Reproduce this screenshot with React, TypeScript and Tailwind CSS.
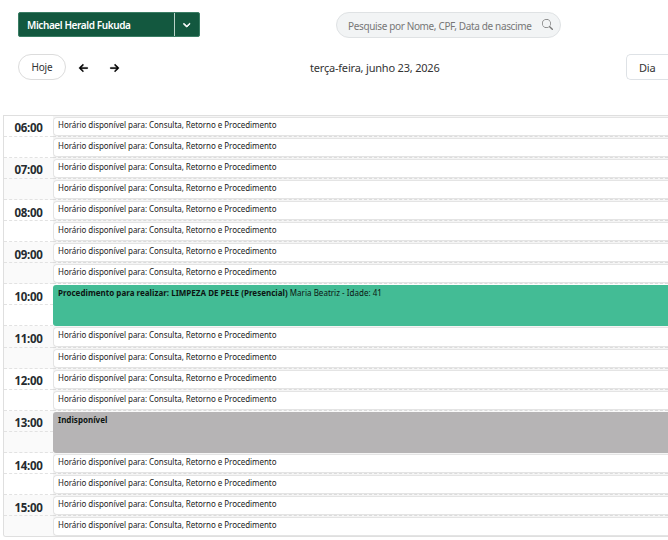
import clsx from 'clsx'
import { BsSearch } from 'react-icons/bs'
import { FaArrowLeft, FaArrowRight, FaChevronDown } from 'react-icons/fa6'

type Appointment = {
  kind: 'booked' | 'blocked'
  title: string
  detail?: string
}

const hours: { time: string; appointment?: Appointment }[] = [
  { time: '06:00' },
  { time: '07:00' },
  { time: '08:00' },
  { time: '09:00' },
  {
    time: '10:00',
    appointment: {
      kind: 'booked',
      title: 'Procedimento para realizar: LIMPEZA DE PELE (Presencial)',
      detail: 'Maria Beatriz - Idade: 41',
    },
  },
  { time: '11:00' },
  { time: '12:00' },
  { time: '13:00', appointment: { kind: 'blocked', title: 'Indisponível' } },
  { time: '14:00' },
  { time: '15:00' },
]

function FreeSlot() {
  return (
    <div className="h-[21.09px] border-b border-dashed border-[#dcdcdc] bg-[#f5f5f5] pt-px">
      <div className="h-full rounded-l-[4px] border border-r-0 border-[#e4e4e4] bg-white pl-1 text-[8px] leading-[13px] tracking-[-0.05px] whitespace-nowrap text-[#222]">
        Horário disponível para: Consulta, Retorno e Procedimento
      </div>
    </div>
  )
}

function AppointmentCard({ kind, title, detail }: Appointment) {
  return (
    <div className="h-[42.18px] pt-px">
      <div
        className={clsx(
          'h-full rounded-l-[3px] pl-[5px] text-[8px] leading-[15px] tracking-[0.02px] whitespace-nowrap text-[#0c1512]',
          kind === 'booked' ? 'bg-[#43bc95]' : 'bg-[#b6b4b5]',
        )}
      >
        <b>{title}</b> {detail && <span>{detail}</span>}
      </div>
    </div>
  )
}

function Toolbar() {
  return (
    <header className="h-[114.6px] pt-3">
      <div className="flex h-[26px]">
        <button className="ml-[18px] flex h-[25px] w-[182px] items-center rounded-[2px] border border-[#3a7d64] bg-[#13583f] text-[10px] font-semibold tracking-[-0.4px] text-white">
          <span className="flex-1 pt-px pl-2 text-left">Michael Herald Fukuda</span>
          <span className="flex h-full w-[25px] items-center justify-center border-l border-[#b9d3c8]">
            <FaChevronDown size={7.5} stroke="currentColor" strokeWidth={60} />
          </span>
        </button>
        <div className="ml-[136px] flex h-[26px] w-[225px] items-center justify-between rounded-full border border-[#dfe2e4] bg-[#f2f4f5] pr-[7px] pl-[11px] text-[10px] whitespace-nowrap text-[#777]">
          <span className="pt-[2px] tracking-[-0.36px]">Pesquise por Nome, CPF, Data de nascime</span>
          <BsSearch size={11} className="mb-px shrink-0" />
        </div>
      </div>
      <div className="mt-4 flex h-[26px] items-center">
        <button className="ml-[18px] h-[26px] w-12 rounded-full border border-[#dcdcdc] text-[10px] tracking-[-0.2px] text-[#333]">
          Hoje
        </button>
        <FaArrowLeft size={11} stroke="currentColor" strokeWidth={24} className="ml-3 pt-px text-black" />
        <FaArrowRight size={11} stroke="currentColor" strokeWidth={24} className="ml-5 pt-px text-black" />
        <h1 className="ml-[190px] w-[131px] pt-[2px] text-[11px] tracking-[-0.2px] whitespace-nowrap text-[#333]">
          terça-feira, junho 23, 2026
        </h1>
        <button className="ml-auto h-[26px] w-[42px] rounded-l-[5px] border border-r-0 border-[#dee2e6] pt-[2px] pl-3 text-left text-[11px] tracking-[-0.2px] text-[#333]">
          Dia
        </button>
      </div>
    </header>
  )
}

export default function App() {
  return (
    <div className="h-[540px] w-[668px] overflow-hidden bg-white font-['Noto_Sans','Open_Sans',sans-serif]">
      <Toolbar />
      <main className="ml-[3px] h-[422px] overflow-hidden rounded-bl-[3px] border-t border-b border-l border-[#dfdfdf]">
        {hours.map(({ time, appointment }, i) => (
          <section key={time} className={clsx('flex h-[42.18px]', i % 2 === 1 && 'bg-[#fafafa]')}>
            <div className="w-[49px]">
              <div className="h-[21.09px] border-b border-dashed border-[#e2e2e2] pt-[3.6px] text-center text-[11.5px] leading-[18px] font-bold tracking-[-0.3px] text-[#252b2f]">
                {time}
              </div>
              <div className="h-[21.09px] border-b border-dashed border-[#e2e2e2]" />
            </div>
            <div className="min-w-0 flex-1">
              {appointment ? (
                <AppointmentCard {...appointment} />
              ) : (
                <>
                  <FreeSlot />
                  <FreeSlot />
                </>
              )}
            </div>
          </section>
        ))}
      </main>
    </div>
  )
}
